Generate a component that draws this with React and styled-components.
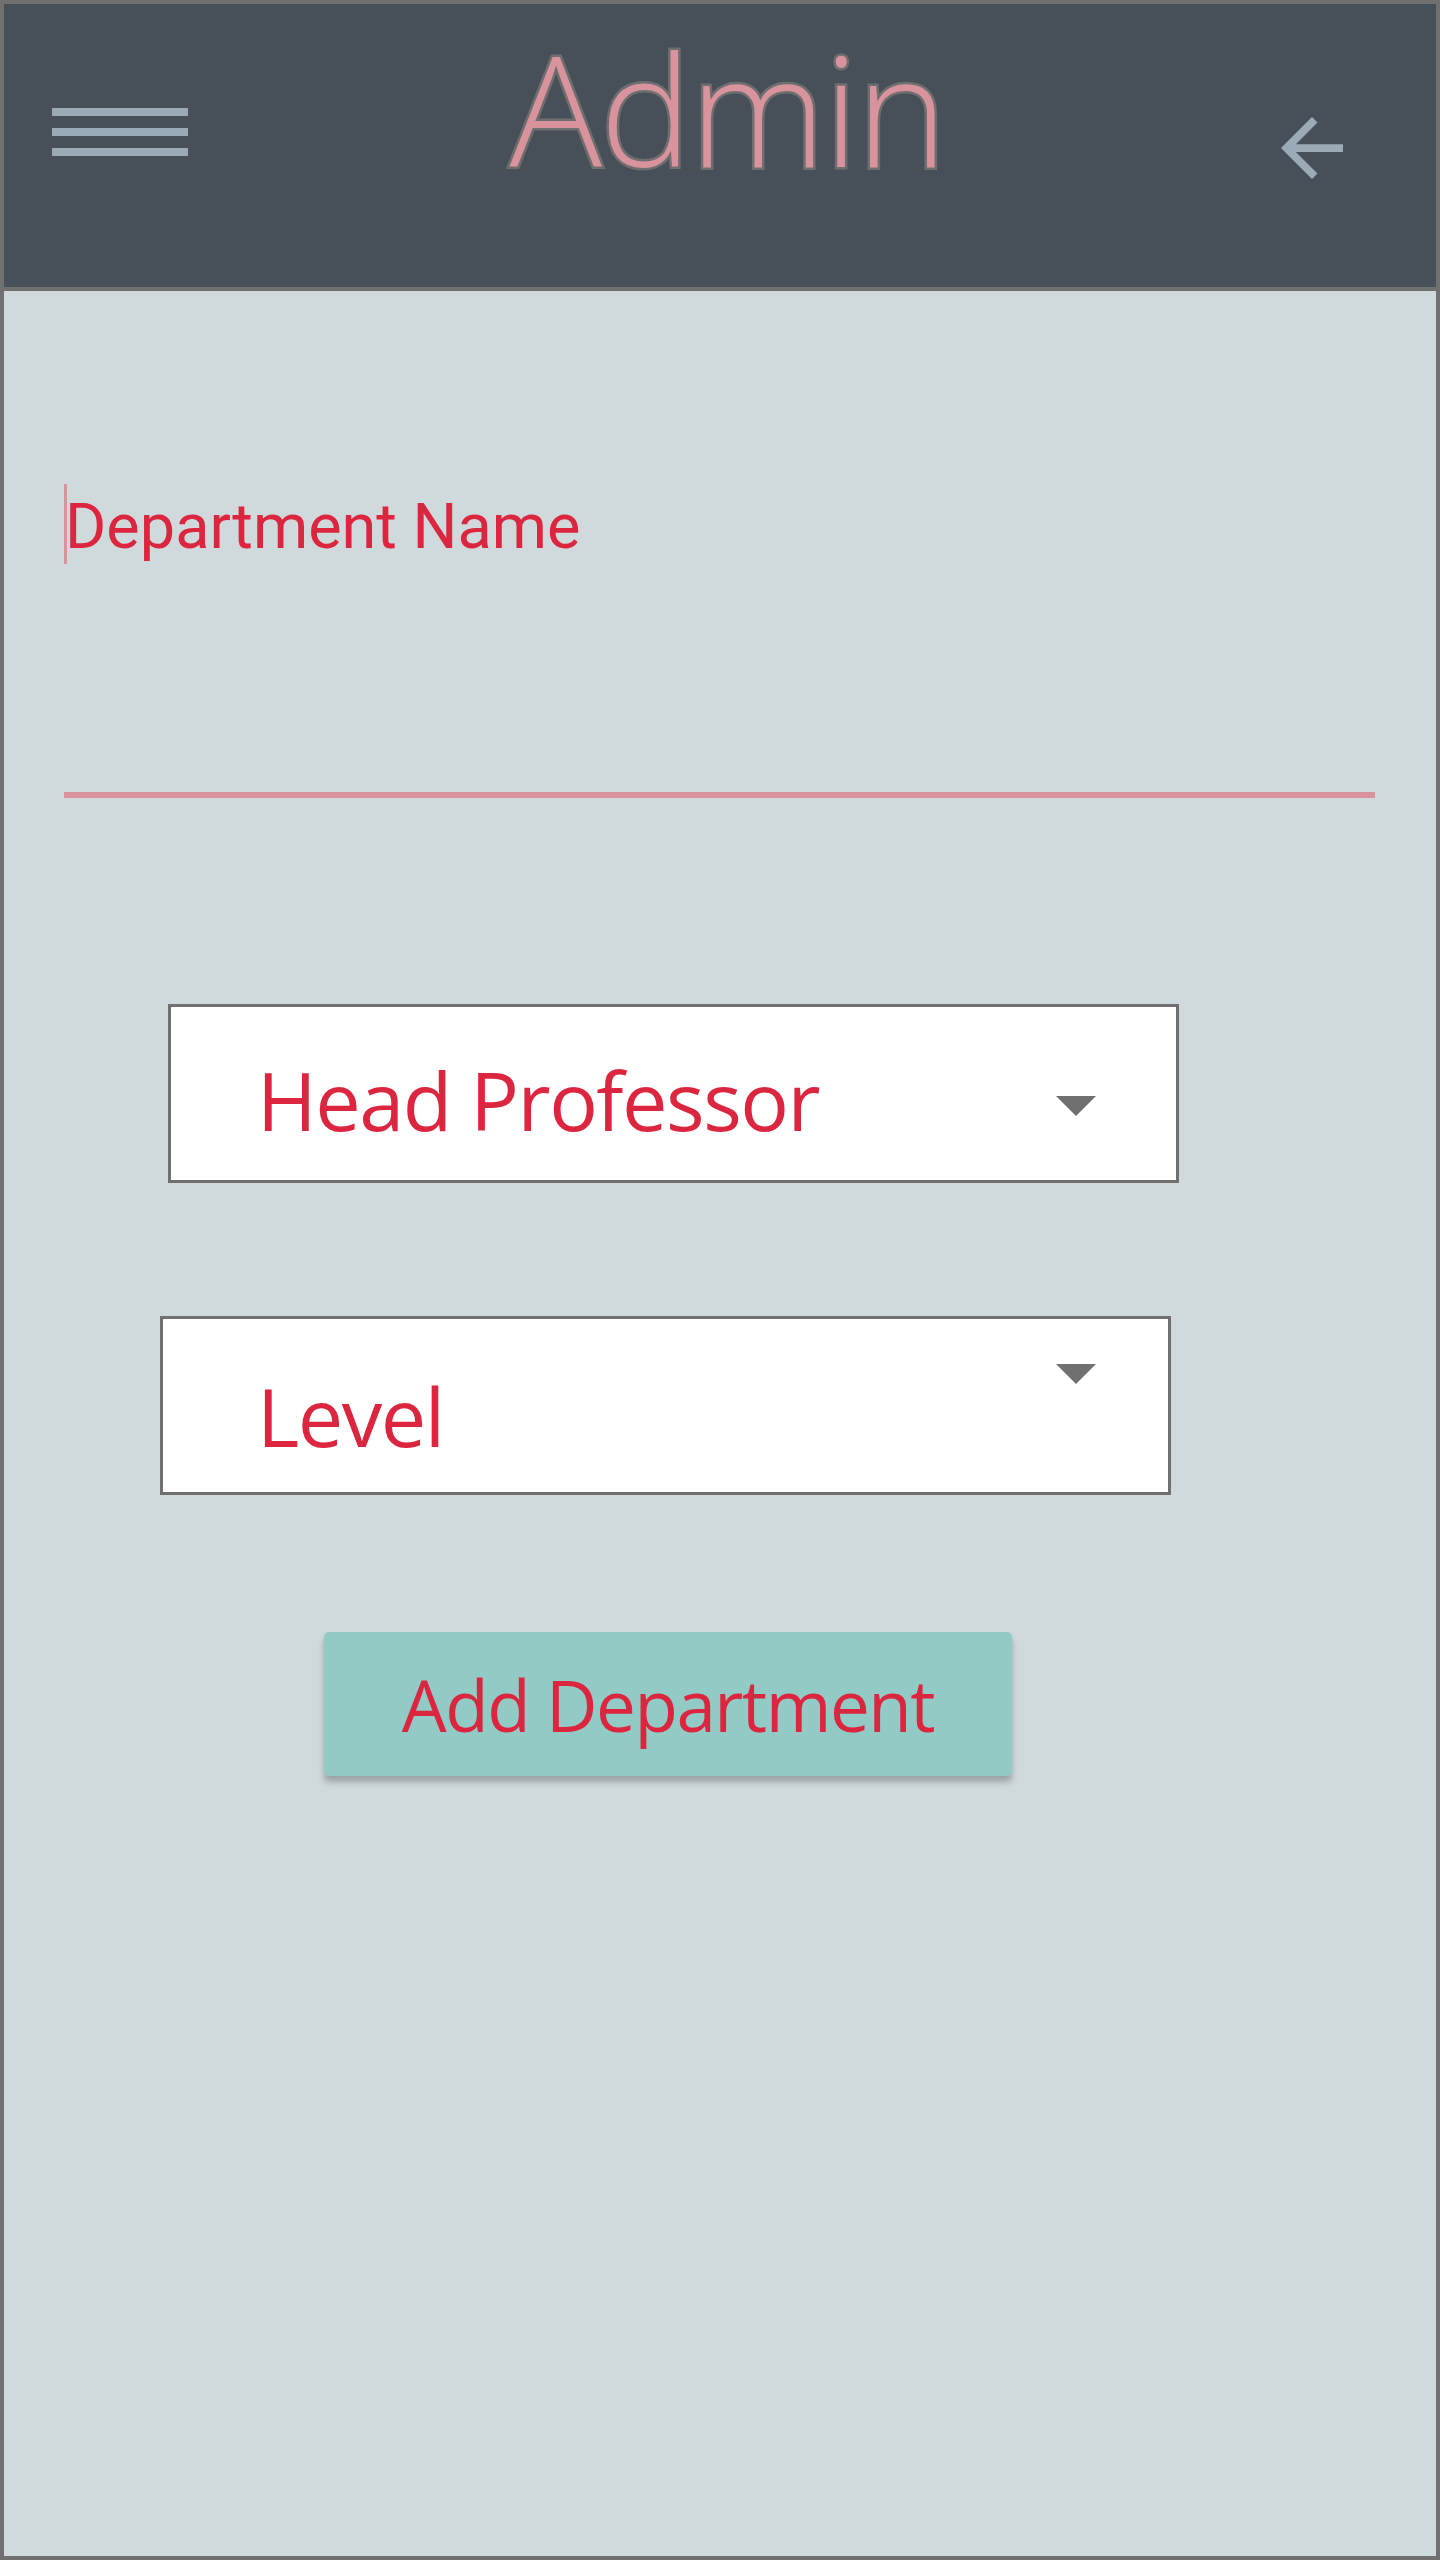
import React from 'react'
import styled, { createGlobalStyle } from 'styled-components'

const GlobalStyle = createGlobalStyle`
  body {
    margin: 0;
    background: #d0d9dc;
  }
`;

function ArrowBack() {
  return (
    <svg width="62" height="62" viewBox="4 4 16 16">
      <path fill="#9aabb7" d="M20 11H7.83l5.59-5.59L12 4l-8 8 8 8 1.41-1.41L7.83 13H20v-2z" />
    </svg>
  )
}

function App() {
  return (
    <>
    <GlobalStyle />
    <Frame>
      <Header>
        <Burger>
          <BurgerLine />
          <BurgerLine />
          <BurgerLine />
        </Burger>
        <Title>Admin</Title>
        <BackButton><ArrowBack /></BackButton>
      </Header>
      <Content>
        <Field>
          <Caret />
          <FieldLabel>Department Name</FieldLabel>
        </Field>
        <Select $left={104} $padLeft={86} $textTop={52} $arrowTop={89} $arrowRight={80}>
          <SelectText>Head Professor</SelectText>
          <DropArrow />
        </Select>
        <Select $left={96} $padLeft={94} $textTop={56} $arrowTop={45} $arrowRight={72} $gap={133}>
          <SelectText>Level</SelectText>
          <DropArrow />
        </Select>
        <AddButton>Add Department</AddButton>
      </Content>
    </Frame>
    </>
  )
}

export default App



const Frame = styled.div`
  width: 1440px;
  height: 2560px;
  box-sizing: border-box;
  border: 4px solid #707070;
  background-color: #d0d9dc;
  display: flex;
  flex-direction: column;
`;

const Header = styled.div`
  height: 283px;
  flex-shrink: 0;
  background-color: #475059;
  border-bottom: 4px solid #707070;
  display: grid;
  grid-template-columns: 1fr auto 1fr;
  align-items: start;
  padding: 0 93px 0 48px;
`;

const Burger = styled.div`
  justify-self: start;
  margin-top: 104px;
  width: 136px;
  display: flex;
  flex-direction: column;
  gap: 12px;
`;

const BurgerLine = styled.div`
  height: 8px;
  background-color: #9aabb7;
`;

const Title = styled.h1`
  margin: 26px 0 0 60px;
  font-family: "Open Sans", "Noto Sans", sans-serif;
  font-weight: 300;
  font-size: 154px;
  line-height: 1;
  letter-spacing: -2px;
  color: #d8939d;
  -webkit-text-stroke: 5px #6e6e6e;
  paint-order: stroke fill;
`;

const BackButton = styled.div`
  justify-self: end;
  margin-top: 113px;
  display: flex;
`;

const Content = styled.div`
  flex: 1;
  display: flex;
  flex-direction: column;
  align-items: flex-start;
  padding: 0 61px 0 60px;
`;

const Field = styled.div`
  align-self: stretch;
  margin-top: 193px;
  height: 308px;
  border-bottom: 6px solid #d8939d;
  display: flex;
  align-items: flex-start;
`;

const Caret = styled.div`
  width: 3px;
  height: 80px;
  background-color: #d8939d;
  flex-shrink: 0;
`;

const FieldLabel = styled.div`
  margin-top: 3px;
  margin-left: -2px;
  font-family: Roboto, sans-serif;
  font-size: 63px;
  line-height: 80px;
  color: #dc2640;
`;

const Select = styled.div`
  margin-top: ${p => p.$gap || 206}px;
  margin-left: ${p => p.$left}px;
  width: 1011px;
  height: 179px;
  box-sizing: border-box;
  border: 3px solid #707070;
  background-color: #ffffff;
  display: flex;
  align-items: flex-start;
  padding-left: ${p => p.$padLeft}px;
  padding-right: ${p => p.$arrowRight}px;

  & > :first-child {
    margin-top: ${p => p.$textTop}px;
  }
  & > :last-child {
    margin-top: ${p => p.$arrowTop}px;
  }
`;

const SelectText = styled.div`
  flex: 1;
  font-family: "Open Sans", "Noto Sans", sans-serif;
  font-size: 81px;
  line-height: 1;
  letter-spacing: -1.5px;
  color: #dc2640;
`;

const DropArrow = styled.div`
  width: 0;
  height: 0;
  border-left: 20px solid transparent;
  border-right: 20px solid transparent;
  border-top: 20px solid #707070;
`;

const AddButton = styled.button`
  margin-top: 137px;
  margin-left: 260px;
  width: 688px;
  height: 144px;
  border: none;
  border-radius: 5px;
  background-color: #92cac5;
  box-shadow: 0 6px 6px rgba(0, 0, 0, 0.25);
  display: flex;
  align-items: center;
  justify-content: center;
  padding: 0;
  font-family: "Open Sans", "Noto Sans", sans-serif;
  font-size: 71px;
  line-height: 1;
  letter-spacing: -1.5px;
  color: #dc2640;
`;
